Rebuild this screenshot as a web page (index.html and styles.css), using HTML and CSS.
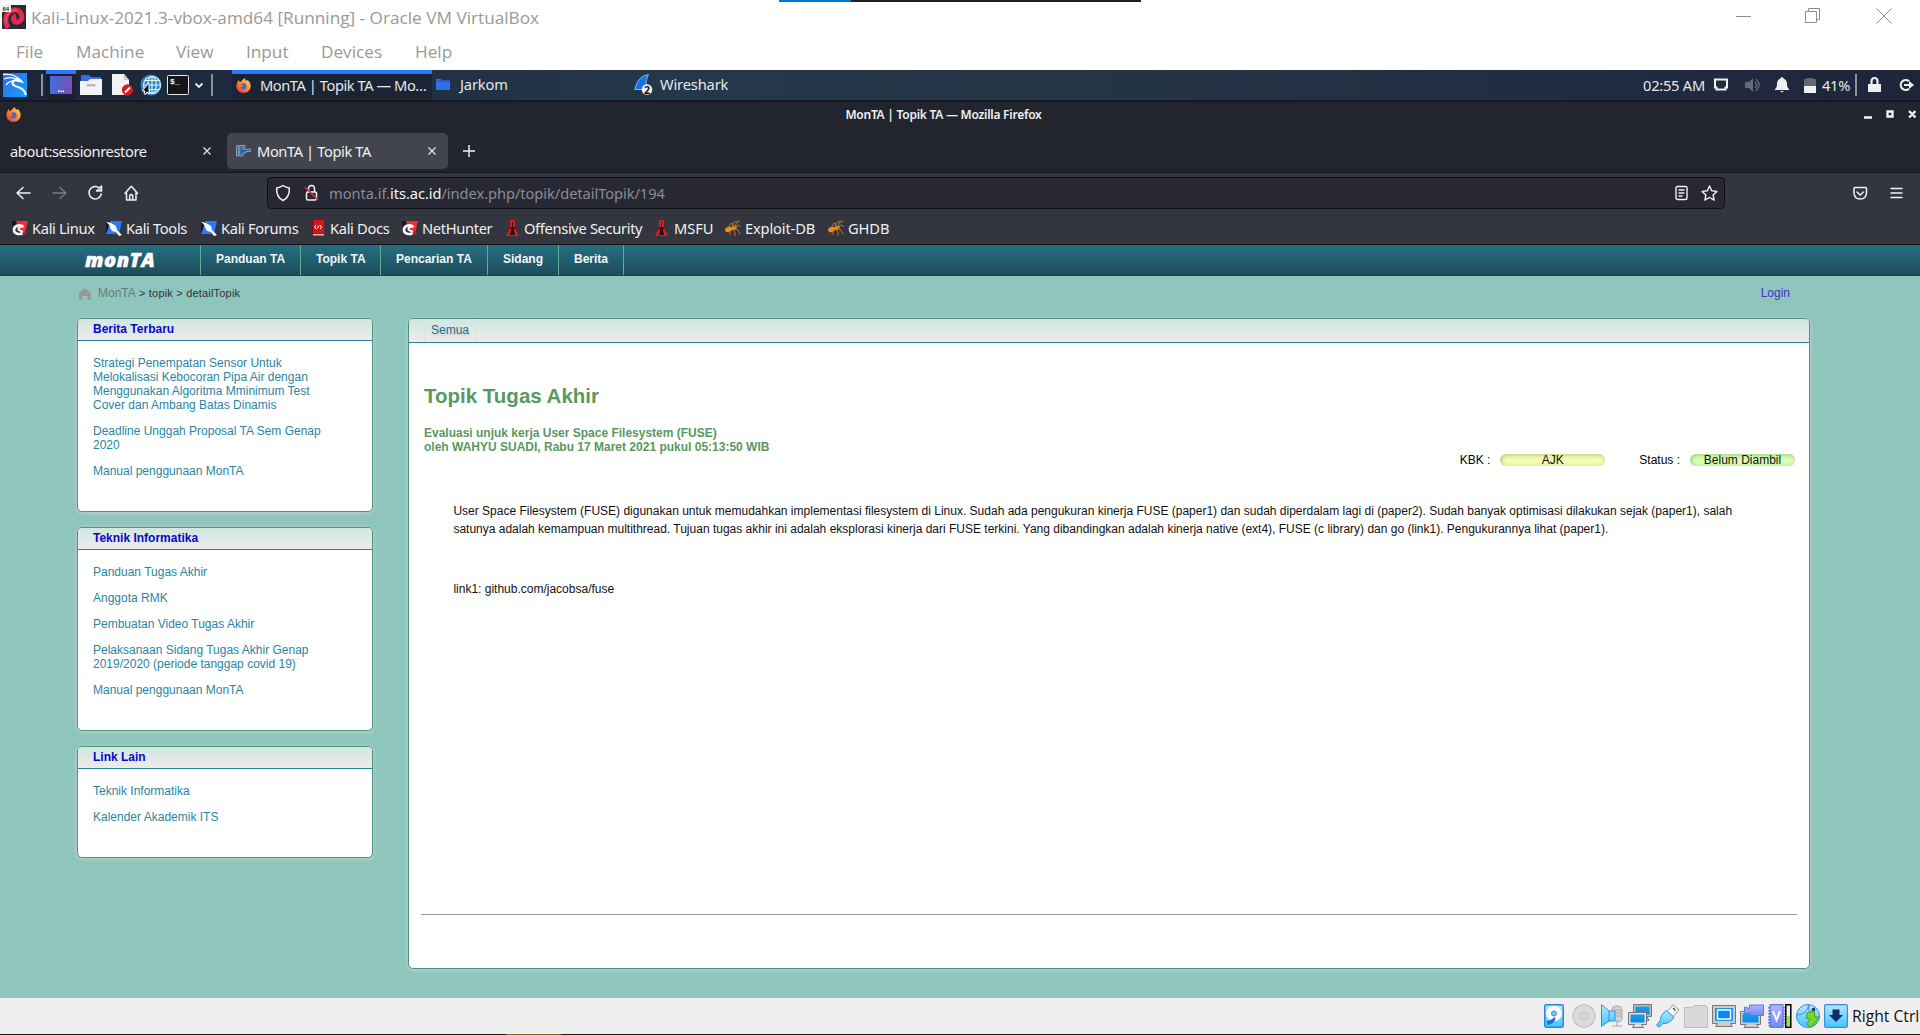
FILE: index.html
```html
<!DOCTYPE html>
<html lang="id">
<head>
<meta charset="utf-8">
<title>MonTA | Topik TA</title>
<link rel="stylesheet" href="styles.css">
</head>
<body>
<svg class="defs" width="0" height="0">
  <defs>
    <linearGradient id="gFox" x1="1" y1="0" x2="0" y2="1"><stop offset="0" stop-color="#ffe14a"/><stop offset=".5" stop-color="#ff8a2a"/><stop offset="1" stop-color="#e8264e"/></linearGradient>
    <linearGradient id="gKali" x1="0" y1="0" x2="1" y2="1"><stop offset="0" stop-color="#2d66ee"/><stop offset="1" stop-color="#18a0ff"/></linearGradient>
    <linearGradient id="gDesk" x1="0" y1="0" x2="1" y2="0"><stop offset="0" stop-color="#3f6fe0"/><stop offset="1" stop-color="#7a4fb0"/></linearGradient>
    <linearGradient id="gSky" x1="0" y1="0" x2="0" y2="1"><stop offset="0" stop-color="#b8e4ff"/><stop offset="1" stop-color="#3fc8ff"/></linearGradient>
    <linearGradient id="gScr" x1="0" y1="0" x2="0" y2="1"><stop offset="0" stop-color="#1aa0e0"/><stop offset="1" stop-color="#0a84f8"/></linearGradient>
    <linearGradient id="gLil" x1="0" y1="0" x2="0" y2="1"><stop offset="0" stop-color="#b4b4ff"/><stop offset="1" stop-color="#6e8cf4"/></linearGradient>
    <symbol id="fox" viewBox="0 0 16 16"><path fill="url(#gFox)" d="M1 5.500 2.600 2.200 4 4.300 5.400 4.100C6 2.800 8 .6 9.600.2c.1 1.400.8 2.200 1.800 3l.7-1.300C14.600 3.700 15.800 6.200 15.600 9 15.300 13 12.200 15.800 8 15.800S.6 13 .4 9C.3 7.700.5 6.500 1 5.500Z"/><path fill="#4267d8" d="M5 6.500c1-.7 2.300-.2 3-1.300 2 .3 3.500 2 3.300 4-.2 1.800-1.600 3-3.300 3S4.800 11 4.600 9.300c1 .5 2.400.3 3-.8C6.500 8.300 5.300 7.700 5 6.500Z"/></symbol>
    <symbol id="dragonR" viewBox="0 0 16 16"><path fill="#17181e" d="M0 1h6L4 4 0 6Z"/><path fill="#f42c34" d="M4 1h12l-3 12L6 7Z"/><path fill="none" stroke="#fff" stroke-width="2.500" d="M11.500 7C8 3.500 1.500 6 2 10.500c.5 3.500 5 4 8.500 3"/><path fill="none" stroke="#fff" stroke-width="2" d="M10.500 6.500c-3 0-4.500 1.500-4 3 .5 1.200 3 .8 4.500 3"/><path fill="#c8183c" d="M11 14.500h4L12 10Z"/></symbol>
    <symbol id="dragonB" viewBox="0 0 16 16"><path fill="#15171e" d="M0 1h5L3 9 0 15Z"/><path fill="#277bfb" d="M4 1h12l-3 13H0l2-5Z"/><path fill="#fff" d="M0 1.500 5 3l5 3 1 4 5 5-3 1-3-4-4-1-3-5 2 1Z"/></symbol>
    <symbol id="tower" viewBox="0 0 13 16"><path fill="#d81c20" d="M4 0h5v8l4 8H0l4-8Z"/><path fill="#3a080c" d="M6 2h1v5h2L8 10l1 5H4l1-5-1-3h2Z"/></symbol>
    <symbol id="ant" viewBox="0 0 16 16"><g fill="#f08c1c"><ellipse cx="3.500" cy="9.500" rx="3.500" ry="2.600" transform="rotate(-15 3.500 9.500)"/><ellipse cx="8" cy="8.200" rx="2.500" ry="1.800"/><circle cx="10.500" cy="7" r="1.500"/></g><path fill="none" stroke="#d07818" stroke-width=".9" d="M3 8 6 3 9 6M7 8l1-5 4-2M10 6l2-4 3-1M10 7l4-2 2 2M9 9l4 1 2 4M7 9l3 3v4M5 10v5"/></symbol>
  </defs>
</svg>
<div class="strip"><i class="strip-blue"></i><i class="strip-dark"></i></div>

<header class="vb-title">
  <svg class="vb-logo" width="24" height="24" viewBox="0 0 24 24"><rect width="24" height="24" fill="#262c34"/><path fill="none" stroke="#e6284c" stroke-width="5" d="M6 23C0 12 7 4 14 5c7 1 8 11 2 12-5 1-6-5-2-6"/><path fill="none" stroke="#ff7088" stroke-width="1" d="M4 18C3 10 9 4 15 5"/><rect width="9" height="7" fill="#eee"/><text x=".5" y="6" class="tiny">64</text></svg>
  <span class="vb-name">Kali-Linux-2021.3-vbox-amd64 [Running] - Oracle VM VirtualBox</span>
  <svg class="vb-ctl" width="157" height="16" viewBox="0 0 157 16" fill="none" stroke="#8c8c8c"><path d="M0 8.500h15M69.500 3.500h11v11h-11zM72.500 3.500v-3h11v11h-3M140.500.5l15 15M155.500.5l-15 15"/></svg>
</header>
<nav class="vb-menu"><span>File</span><span>Machine</span><span>View</span><span>Input</span><span>Devices</span><span>Help</span></nav>

<div class="panel">
  <svg class="p-kali" width="24" height="24" viewBox="0 0 24 24"><rect width="24" height="24" fill="url(#gKali)"/><path fill="none" stroke="#fff" stroke-width="1.300" d="M0 1.500C6 1 13 2 17 7M1 6c5-2 10-2 15 1.500M3 12C6 8 10 7 16 8"/><path fill="none" stroke="#fff" stroke-width="2" d="M14 7c-5 0-6 4-2 6 4 1.500 9 2 11 9"/><path fill="#fff" d="M13 5c4 0 6 2 8 5l-3-.5-4-1Z"/></svg>
  <i class="p-sep s1"></i>
  <span class="p-show"><svg width="22" height="18" viewBox="0 0 22 18"><rect width="22" height="18" fill="url(#gDesk)"/><path stroke="#fff" stroke-width="1.500" stroke-dasharray="1.500 .8" d="M8 15.200h6.500"/></svg></span>
  <svg class="p-files" width="22" height="20" viewBox="0 0 22 20"><path fill="#2f6fe8" d="M1 0h8l2 2h10v6H1Z"/><path fill="#f4f4f6" d="M0 6h8l2-2h12v16H0Z"/><rect x="6.500" y="9" width="9" height="2.500" rx="1" fill="#bbb"/></svg>
  <svg class="p-doc" width="22" height="22" viewBox="0 0 22 22"><path fill="#f2f2f2" d="M0 0h12l5 6v15H0Z"/><path fill="#c9c9cc" d="M12 0v6h5Z"/><circle cx="15.500" cy="16" r="5.700" fill="#d41c20"/><path stroke="#fff" stroke-width="2" d="m13 18.500 5-5"/></svg>
  <svg class="p-globe" width="22" height="22" viewBox="0 0 22 22"><circle cx="11" cy="11" r="10.500" fill="#2f86c4"/><g fill="none" stroke="#e4f6fa" stroke-width="1.100"><circle cx="12" cy="11" r="8.500"/><ellipse cx="12" cy="11" rx="4.200" ry="8.500"/><path d="M12 2v18M3 11h18M5 6.500h14M5 15.500h14"/></g><path fill="#111" stroke="#fff" d="m9 9-7 8 3 0-1 3 2 0 1-2 2 2Z"/></svg>
  <svg class="p-term" width="22" height="20" viewBox="0 0 22 20"><rect x=".5" y=".5" width="21" height="19" rx="1" fill="#151618" stroke="#e6e6e6"/><text x="3" y="9" class="mono">$_</text></svg>
  <svg class="p-chev" width="10" height="7" viewBox="0 0 10 7"><path d="m1.500 1.500 3.500 3.500 3.500-3.500" fill="none" stroke="#eee" stroke-width="1.800"/></svg>
  <i class="p-sep s2"></i>
  <span class="task active"><svg width="15" height="15"><use href="#fox"/></svg><span class="t-mon">MonTA | Topik TA — Mo…</span></span>
  <span class="task jar"><svg width="14" height="11" viewBox="0 0 14 11"><path fill="#2f6fe8" d="M0 0h5l1 1.500h8V11H0Z"/><path stroke="#2456b8" d="M0 2h14"/></svg><span>Jarkom</span></span>
  <span class="task wire"><svg width="19" height="22" viewBox="0 0 19 22"><path fill="#1671e8" stroke="#8fb8ee" d="M.8 15.500C3 6 8 1 14.500.8 12 5 11.500 10 13 15.500Z"/><circle cx="13" cy="15.500" r="5.300" fill="#f2f2f2"/><text x="10" y="19.500" class="badge">2</text></svg><span>Wireshark</span></span>
  <span class="clock">02:55 AM</span>
  <svg class="p-tray" width="109" height="18" viewBox="1713 76 109 18"><path fill="none" stroke="#f0f0f0" stroke-width="2" d="M1715 79.500h12v8h-1.500v2h-9v-2h-1.500z"/><path fill="#646975" d="M1745 82h4l4-4v14l-4-4h-4z"/><path fill="none" stroke="#646975" stroke-width="1.500" d="M1755 82q3 3 0 6M1756 79q6 6 0 12"/><path fill="#f0f0f0" d="M1775 89q2-1 2-5t4-6q0-1 1-1t1 1q4 2 4 6t2 5v1h-14zM1780 91h4l-2 1.500z"/><path fill="#636773" d="M1804 79h3v-1h6v1h3v7h-12z"/><path fill="#f0f0f0" d="M1804 86h12v7h-12z"/></svg>
  <span class="batt">41%</span><i class="p-sep s3"></i>
  <svg class="p-lock" width="46" height="18" viewBox="0 0 46 18"><path fill="#eee" d="M0 8h13v8H0Z"/><path fill="none" stroke="#eee" stroke-width="2.200" d="M3.500 9V5.500q0-3.500 3-3.500t3 3.500V9M41 5.200A5 5 0 1 0 41 12.800"/><path fill="#eee" d="M36 8h5V5l5 4-5 4v-3h-5Z"/></svg>
</div>

<section class="ff">
  <div class="ff-title"><svg width="15" height="15"><use href="#fox"/></svg><b>MonTA | Topik TA — Mozilla Firefox</b><svg width="52" height="9" viewBox="0 0 52 9"><path d="M0 7.500h8M23.500 1.500h5v5h-5zM45 1l6.500 6.500M51.500 1 45 7.500" fill="none" stroke="#f5f5f5" stroke-width="2.300"/></svg></div>
  <div class="tabs">
    <div class="tab first"><span>about:sessionrestore</span><svg class="x" width="8" height="8" viewBox="0 0 8 8"><path d="m.5.5 7 7M7.500.5l-7 7"/></svg></div>
    <div class="tab on"><svg width="15" height="12" viewBox="0 0 15 12"><path fill="#285f94" stroke="#9abbd2" stroke-width=".8" d="M.5.5h2.200v10.500H.5zM3.800.5h5v2h-2v1.700H14.500v2.300H10V8H6.800v3h-3Z"/></svg><span>MonTA | Topik TA</span><svg class="x" width="8" height="8" viewBox="0 0 8 8"><path d="m.5.5 7 7M7.500.5l-7 7"/></svg></div>
    <svg class="plus" width="12" height="12" viewBox="0 0 12 12"><path d="M6 0v12M0 6h12" stroke="#f3f3f5" stroke-width="1.400"/></svg>
  </div>
  <div class="bar">
    <svg class="nav-ico" width="124" height="18" viewBox="0 0 124 18" fill="none" stroke="#f1f1f3" stroke-width="1.500" stroke-linejoin="round" stroke-linecap="round"><path d="M14 9H1M7 3.500 1 9l6 5.500"/><path stroke="#777981" d="M37 9h13M44 3.500 50 9l-6 5.500"/><path d="M84.500 5.500A6.200 6.200 0 1 0 85.300 10M85.500 2v5h-5z"/><path d="M109 9.500 114.500 3q.8-.8 1.600 0l5.500 6.500M110.500 8.500V16h9.500V8.500M113.700 16v-4q0-1.500 1.500-1.500t1.500 1.500v4"/></svg>
    <div class="url">
      <svg width="44" height="18" viewBox="0 0 44 18" fill="none" stroke="#f1f1f3" stroke-width="1.500"><path stroke-linejoin="round" d="M8 1.500q3 2 6.300 2.500Q15 13 8 16.500 1 13 1.700 4 5 3.500 8 1.500Z"/><rect x="31.500" y="8" width="10" height="8" rx="1.500"/><path d="M33.500 8V5q0-3.500 3-3.500t3 3.500v3"/><path stroke="#e22850" stroke-width="1.700" d="m30 3 13 13"/></svg>
      <span class="addr">monta.if.<b>its.ac.id</b>/index.php/topik/detailTopik/194</span>
      <svg class="url-r" width="43" height="17" viewBox="0 0 43 17" fill="none" stroke="#f1f1f3" stroke-width="1.400" stroke-linejoin="round"><rect x="1" y="1.500" width="11" height="13" rx="1.500"/><path d="M3.500 5h6M3.500 8h6M3.500 11h4"/><path d="m34.500 1 2.200 4.800 5.200.6-3.800 3.500 1 5.200-4.600-2.600-4.600 2.600 1-5.200-3.800-3.500 5.200-.6Z"/></svg>
    </div>
    <svg class="bar-r" width="50" height="15" viewBox="0 0 50 15" fill="none" stroke="#f1f1f3" stroke-width="1.500" stroke-linecap="round"><path d="M2 1.500h10.500q1 0 1 1V7q-.5 6-6.300 6T1 7V2.500q0-1 1-1ZM4 6l3.200 3L10.500 6M38 2.500h11M38 7h11M38 11.500h11"/></svg>
  </div>
  <div class="marks">
    <a class="m1"><svg width="16" height="16"><use href="#dragonR"/></svg>Kali Linux</a>
    <a class="m2"><svg width="16" height="16"><use href="#dragonB"/></svg>Kali Tools</a>
    <a class="m3"><svg width="16" height="16"><use href="#dragonB"/></svg>Kali Forums</a>
    <a class="m4"><svg width="12" height="16" viewBox="0 0 12 16"><path fill="#d81418" d="M0 0h12v13.500H0Z"/><path fill="#8c0c10" d="M0 0h1.500v14H0Z"/><path fill="#e7b4b4" d="M1 14h11v1.500H1Z"/><path fill="none" stroke="#fff" d="M4 5 2.500 7 4 9M8 5l1.500 2L8 9M7 5.500l-2 3"/></svg>Kali Docs</a>
    <a class="m5"><svg width="16" height="16"><use href="#dragonR"/></svg>NetHunter</a>
    <a class="m6"><svg width="13" height="16"><use href="#tower"/></svg>Offensive Security</a>
    <a class="m7"><svg width="13" height="16"><use href="#tower"/></svg>MSFU</a>
    <a class="m8"><svg width="16" height="16"><use href="#ant"/></svg>Exploit-DB</a>
    <a class="m9"><svg width="16" height="16"><use href="#ant"/></svg>GHDB</a>
  </div>
</section>

<main class="page">
  <nav class="menu"><span class="logo">monTA</span><a class="n1">Panduan TA</a><a class="n2">Topik TA</a><a class="n3">Pencarian TA</a><a class="n4">Sidang</a><a class="n5">Berita</a></nav>
  <div class="crumbs"><svg width="12" height="12" viewBox="0 0 12 12"><path fill="#999" d="M6 0l6 5v7H8.500V8h-5v4H0V5Z"/></svg><span class="home">MonTA</span><span class="path">&gt; topik &gt; detailTopik</span><a class="login">Login</a></div>
  <div class="cols">
    <aside>
      <section class="box"><h3>Berita Terbaru</h3><ul><li>Strategi Penempatan Sensor Untuk<br>Melokalisasi Kebocoran Pipa Air dengan<br>Menggunakan Algoritma Mminimum Test<br>Cover dan Ambang Batas Dinamis</li><li>Deadline Unggah Proposal TA Sem Genap<br>2020</li><li>Manual penggunaan MonTA</li></ul></section>
      <section class="box"><h3>Teknik Informatika</h3><ul><li>Panduan Tugas Akhir</li><li>Anggota RMK</li><li>Pembuatan Video Tugas Akhir</li><li>Pelaksanaan Sidang Tugas Akhir Genap<br>2019/2020 (periode tanggap covid 19)</li><li>Manual penggunaan MonTA</li></ul></section>
      <section class="box"><h3>Link Lain</h3><ul><li>Teknik Informatika</li><li>Kalender Akademik ITS</li></ul></section>
    </aside>
    <article class="box main">
      <div class="tabrow"><a>Semua</a></div>
      <h1>Topik Tugas Akhir</h1>
      <h2>Evaluasi unjuk kerja User Space Filesystem (FUSE)<br>oleh WAHYU SUADI, Rabu 17 Maret 2021 pukul 05:13:50 WIB</h2>
      <div class="meta"><span>KBK :</span><span class="pill yellow">AJK</span><span class="st">Status :</span><span class="pill green">Belum Diambil</span></div>
      <div class="body"><p>User Space Filesystem (FUSE) digunakan untuk memudahkan implementasi filesystem di Linux. Sudah ada pengukuran kinerja FUSE (paper1) dan sudah diperdalam lagi di (paper2). Sudah banyak optimisasi dilakukan sejak (paper1), salah<br>satunya adalah kemampuan multithread. Tujuan tugas akhir ini adalah eksplorasi kinerja dari FUSE terkini. Yang dibandingkan adalah kinerja native (ext4), FUSE (c library) dan go (link1). Pengukurannya lihat (paper1).</p><p>link1: github.com/jacobsa/fuse</p></div>
      <hr>
    </article>
  </div>
</main>

<footer class="status">
  <svg width="20" height="24" viewBox="0 0 20 24"><rect x=".7" y=".7" width="18.600" height="22.600" rx="1.500" fill="url(#gSky)" stroke="#2a84e0" stroke-width="1.400"/><circle cx="10" cy="9.500" r="7.800" fill="#fff"/><circle cx="10" cy="9.500" r="2.600" fill="#7cc0f4" stroke="#2b7fe0" stroke-width=".8"/><path fill="#1f6fd0" d="M2.500 17q4 0 8-4l1 2q-2 5-8 6Z"/></svg>
  <svg width="24" height="24" viewBox="0 0 24 24"><circle cx="12" cy="12" r="11.300" fill="#d9d9d9" stroke="#bdbdbd"/><circle cx="12" cy="12" r="3" fill="#efefef" stroke="#b5b5b5"/><circle cx="12" cy="12" r="1" fill="#bbb"/></svg>
  <svg width="24" height="24" viewBox="0 0 24 24"><g fill="#d4d4d4" stroke="#aaa"><rect x="12" y="2" width="10" height="15" rx="4"/><path d="M17 17v5M12 22h10M14 6h8M14 9h8M14 12h8M21 12q3 6-4 6"/></g><path fill="url(#gSky)" stroke="#3a8ce0" d="M1.500.5 9 7h6v10H9l-7.500 5.500Z"/><path stroke="#3a8ce0" d="M9 7v10"/></svg>
  <svg width="24" height="24" viewBox="0 0 24 24"><path fill="#bbb" stroke="#777" d="M5.500.5h18v12H19l2 4H8V12H5.500Z"/><path fill="url(#gScr)" d="M7.500 2.500h14v8h-14Z"/><path fill="#ddd" stroke="#777" d="M.5 8.500h18v12h-5l2 3h-11l2-3H.5Z"/><path fill="url(#gScr)" d="M2.500 10.500h14v8h-14Z"/></svg>
  <svg width="24" height="24" viewBox="0 0 24 24"><path fill="#f8f8f8" stroke="#999" d="m17 .8 6 5-6 7-6-5Z"/><path stroke="#555" stroke-width="1.500" d="m17 4 1.500 1.200M19.500 6.500l-1.500-1.200"/><path fill="url(#gSky)" stroke="#3a8ce0" d="M10 6.500 18 13q-4 7-11 6.500l-4 3.700-2.500-2L4 17Q4 11 10 6.500Z"/></svg>
  <svg width="24" height="24" viewBox="0 0 24 24"><path fill="#d8d8d8" stroke="#bbb" d="M.5 3.500H8l2-2h12v2h1.500v20H.5Z"/></svg>
  <svg width="24" height="24" viewBox="0 0 24 24"><path fill="#ccc" stroke="#777" d="M.5 1.500h23v18h-5l2 3h-17l2-3h-5Z"/><path fill="#1499e8" d="M3 4h18v13H3Z"/><path fill="#0a84f8" stroke="#fff" stroke-width="1.400" d="M5.500 6h13v9h-13Z"/></svg>
  <svg width="24" height="24" viewBox="0 0 24 24"><path fill="#ccc" stroke="#777" d="M.5 7.500h20v13h-4l2 3H4l2-3H.5Z"/><path fill="url(#gScr)" d="M2.500 9.500h16v9h-16Z"/><path fill="url(#gLil)" stroke="#5f78d8" d="M9.500 1h14v10.500h-14V8.500l-5 1.500V3l5 1.500Z"/></svg>
  <svg width="24" height="24" viewBox="0 0 24 24"><rect x="2" y=".7" width="13" height="22.600" fill="url(#gLil)" stroke="#4f68d8"/><path stroke="#4f68d8" stroke-width="1.500" stroke-dasharray="1.500 1.500" d="M1 3v19M16 3v19"/><path fill="none" stroke="#fff" stroke-width="2" d="m5 7 3.500 9L12 7"/><path stroke="#000" fill="#eee" stroke-width="1.500" d="M17.800.8h5v22.400h-5Z"/><path fill="#8f0" d="M19 12h3v10h-3Z"/></svg>
  <svg width="24" height="24" viewBox="0 0 24 24"><circle cx="12" cy="12" r="11.500" fill="url(#gSky)" stroke="#3a8ce0"/><path fill="none" stroke="#3a8ce0" d="M1 11q9 0 12-10M13 1q-2 5 2 8"/><circle cx="17.500" cy="5.500" r="1.800" fill="#123a70"/><path fill="#77d820" stroke="#4c9c10" d="m11 9 7-2 1 6 4.500 0-9 10.500-4-4 4-4-4-1.500Z"/></svg>
  <svg width="24" height="24" viewBox="0 0 24 24"><rect x=".6" y=".6" width="22.800" height="22.800" rx="1.500" fill="url(#gSky)" stroke="#3a8ce0" stroke-width="1.200"/><path fill="#0b2e6b" d="M8.500 5.500h7V11H19l-7 7-7-7h3.500Z"/></svg>
  <span>Right Ctrl</span>
</footer>
<div class="taskedge"><i></i></div>
</body>
</html>
```
FILE: styles.css
```css
* { box-sizing: border-box; }
body { margin: 0; width: 1920px; height: 1035px; overflow: hidden; display: flex; flex-direction: column; background: #fff; font-family: "Noto Sans", sans-serif; font-size: 14.67px; position: relative; white-space: nowrap; }
svg { display: block; flex: none; }
h1, h2, h3, ul, p { margin: 0; padding: 0; }
.defs { position: absolute; }
.strip { position: absolute; left: 779px; top: 0; display: flex; height: 2px; }
.strip i { height: 2px; }
.strip-blue { width: 72px; background: #0078d7; }
.strip-dark { width: 290px; background: #1f1f1f; }
.tiny { font: bold 6px "Liberation Sans", sans-serif; fill: #333; }
.mono { font: bold 8px "Liberation Mono", monospace; fill: #fff; }
.badge { font: bold 10.5px "Noto Sans", sans-serif; fill: #111; }

.vb-title { height: 35px; flex: none; display: flex; align-items: center; padding-left: 2px; font-family: "Open Sans", sans-serif; font-size: 17.2px; color: #999; }
.vb-logo { margin-top: -1px; }
.vb-name { margin: -1px 0 0 5px; }
.vb-ctl { margin: -3px 27px 0 auto; }
.vb-menu { height: 35px; flex: none; display: flex; padding: 0 0 3px 16px; align-items: center; font-family: "Open Sans", sans-serif; font-size: 17.2px; color: #999; }
.vb-menu span:nth-child(1) { width: 60px; }
.vb-menu span:nth-child(2) { width: 100px; }
.vb-menu span:nth-child(3) { width: 70px; }
.vb-menu span:nth-child(4) { width: 75px; }
.vb-menu span:nth-child(5) { width: 94px; }

.panel { height: 30px; flex: none; display: flex; align-items: center; background: linear-gradient(90deg, #1c2438, #24384a 35%, #243646 55%, #20293f 90%, #1e2539); color: #e6e8ea; }
.panel span { padding-bottom: 1px; }
.p-kali { margin-left: 3px; }
.p-sep { width: 2px; height: 22px; background: #8b909a; flex: none; }
.s1 { margin-left: 14px; }
.panel .p-show { width: 30px; height: 30px; margin-left: 3px; padding: 2px 4px 0; border-top: 4px solid #2777ff; background: #182032; }
.p-files { margin-left: 4px; }
.p-doc { margin-left: 10px; }
.p-globe { margin-left: 6px; }
.p-term { margin-left: 5px; }
.p-chev { margin-left: 5px; }
.s2 { margin-left: 7px; }
.task { display: flex; align-items: center; height: 30px; }
.panel .active { margin-left: 19px; width: 200px; padding: 0 0 4px 4px; gap: 9px; border-top: 4px solid #2777ff; background: #1b2434; }
.t-mon { letter-spacing: -.45px; }
.jar { width: 198px; padding-left: 4px; gap: 10px; letter-spacing: -.15px; }
.wire { padding-left: 4px; gap: 7px; letter-spacing: -.15px; }
.clock { margin-left: auto; margin-right: 9px; width: 61px; letter-spacing: -.25px; }
.batt { width: 29px; letter-spacing: -.3px; }
.s3 { margin-left: 4px; }
.p-lock { margin: 0 6px 0 11px; }

.ff { height: 145px; flex: none; background: #22252d; border-top: 2px solid #14171c; color: #f1f1f3; display: flex; flex-direction: column; }
.ff-title { height: 26px; display: flex; justify-content: space-between; align-items: center; padding: 0 4px 1px 6px; font-size: 12px; }
.ff-title b { margin-left: 2px; font-weight: 600; letter-spacing: -.25px; }
.tabs { height: 45px; display: flex; align-items: center; padding-top: 1px; border-bottom: 1px solid #14161b; letter-spacing: -.4px; }
.tab { height: 36px; display: flex; align-items: center; border-radius: 5px; }
.first { width: 227px; padding: 0 16px 0 10px; }
.x { margin-left: auto; fill: none; stroke: #e8e8ea; stroke-width: 1.2; }
.on { width: 221px; background: #42454d; padding: 0 12px 0 9px; gap: 6px; }
.plus { margin-left: 15px; }
.bar { height: 40px; background: #33363e; display: flex; align-items: center; }
.nav-ico { margin-left: 16px; }
.url { margin-left: 127px; width: 1458px; height: 32px; border: 1px solid #101218; border-radius: 4px; background: #272833; display: flex; align-items: center; padding: 0 6px 0 7px; }
.addr { margin-left: 10px; color: #8b8c95; letter-spacing: -.06px; }
.addr b { color: #f4f4f6; font-weight: 400; }
.url-r { margin-left: auto; }
.bar-r { margin-left: 128px; }
.marks { height: 32px; background: #33363e; border-bottom: 1px solid #0f1114; display: flex; align-items: center; padding: 0 0 1px 12px; letter-spacing: -.33px; }
.marks a { display: flex; align-items: center; gap: 4px; }
.m1 { width: 94px; } .m2 { width: 95px; } .m3 { width: 111px; }
.marks .m4 { width: 90px; gap: 6px; }
.marks .m5 { width: 104px; gap: 4px; }
.marks .m6 { width: 149px; gap: 5px; }
.marks .m7 { width: 70px; gap: 6px; letter-spacing: -.1px; }
.m8 { width: 103px; letter-spacing: -.15px; }
.m9 { letter-spacing: -.1px; }

.page { height: 753px; flex: none; background: #8ec5bc; font: 12px/14px "Liberation Sans", Arial, sans-serif; }
.menu { height: 31px; border-bottom: 1px solid #323c42; background: linear-gradient(#256f83, #1d4c5a); display: flex; color: #f5f5f5; font-weight: bold; line-height: 28px; }
.logo { width: 200px; padding-left: 85px; font: italic 800 20px/29px "Open Sans", sans-serif; -webkit-text-stroke: .5px #fff; letter-spacing: .5px; color: #fff; }
.menu a { border-left: 1px solid #5cae9b; padding-left: 15px; height: 30px; }
.n1 { width: 100px; } .n2 { width: 80px; } .n3 { width: 107px; } .n4 { width: 71px; }
.menu .n5 { width: 66px; border-right: 1px solid #5cae9b; }
.crumbs { height: 42px; padding: 10px 130px 0 79px; display: flex; }
.crumbs svg { margin-top: 2px; }
.home { margin-left: 7px; width: 41px; color: #687d7a; }
.path { font-size: 11px; color: #333; line-height: 15px; letter-spacing: .19px; }
.login { margin-left: auto; color: #4432cc; }
.cols { display: flex; gap: 35px; padding-left: 77px; }
aside { width: 296px; display: flex; flex-direction: column; gap: 15px; }
.box { border: 1px solid #4a9484; border-radius: 5px; background: #fff; box-shadow: 0 1px 5px rgba(205, 210, 205, .9); overflow: hidden; }
.box h3 { height: 22px; padding-left: 15px; font-size: 12px; line-height: 20px; color: #0808cc; background: linear-gradient(#d2e6e1, #ececec); border-bottom: 1px solid #2a8299; }
.box ul { list-style: none; padding: 15px 15px 33px; color: #2a85a2; display: grid; gap: 12px; }
.main { width: 1402px; height: 651px; }
.tabrow { height: 24px; background: linear-gradient(#d2e6e1, #ececec); border-bottom: 1px solid #2a8299; padding-left: 15px; }
.tabrow a { display: block; width: 52px; height: 23px; padding-left: 6px; line-height: 22px; border: solid #dde3e2; border-width: 0 1px; color: #1c6f98; text-shadow: 1px 2px 2px #ccc; }
h1 { margin: 40px 0 0 15px; font-size: 20.5px; line-height: 26px; color: #5a9860; }
h2 { margin: 17px 0 0 15px; font-size: 12px; line-height: 14px; color: #5a9860; }
.meta { display: flex; height: 12px; line-height: 12px; padding: 0 14px 0 0; justify-content: flex-end; }
.pill { width: 105px; text-align: center; border-radius: 6px; margin-left: 10px; color: #111; box-shadow: inset 1px 1px 4px rgba(80, 100, 60, .4); }
.yellow { background: #f2feb0; }
.green { background: #d9ffb2; }
.st { margin-left: 34px; }
.body { height: 448px; padding: 36px 0 0 44.4px; line-height: 18px; color: #111; }
.body p + p { margin-top: 42px; }
hr { border: 0; height: 1px; margin: 0 12px; background: #999; }
.status { height: 36px; flex: none; background: #efefef; display: flex; align-items: center; justify-content: flex-end; gap: 4px; padding-right: 2px; font: 15.7px "Open Sans", sans-serif; color: #111; }
.status svg:first-child { margin-right: 4px; }
.status span { width: 66px; }
.taskedge { height: 1px; background: #1c1c1c; padding-left: 506px; }
.taskedge i { display: block; width: 55px; height: 1px; background: #99602f; }
```
